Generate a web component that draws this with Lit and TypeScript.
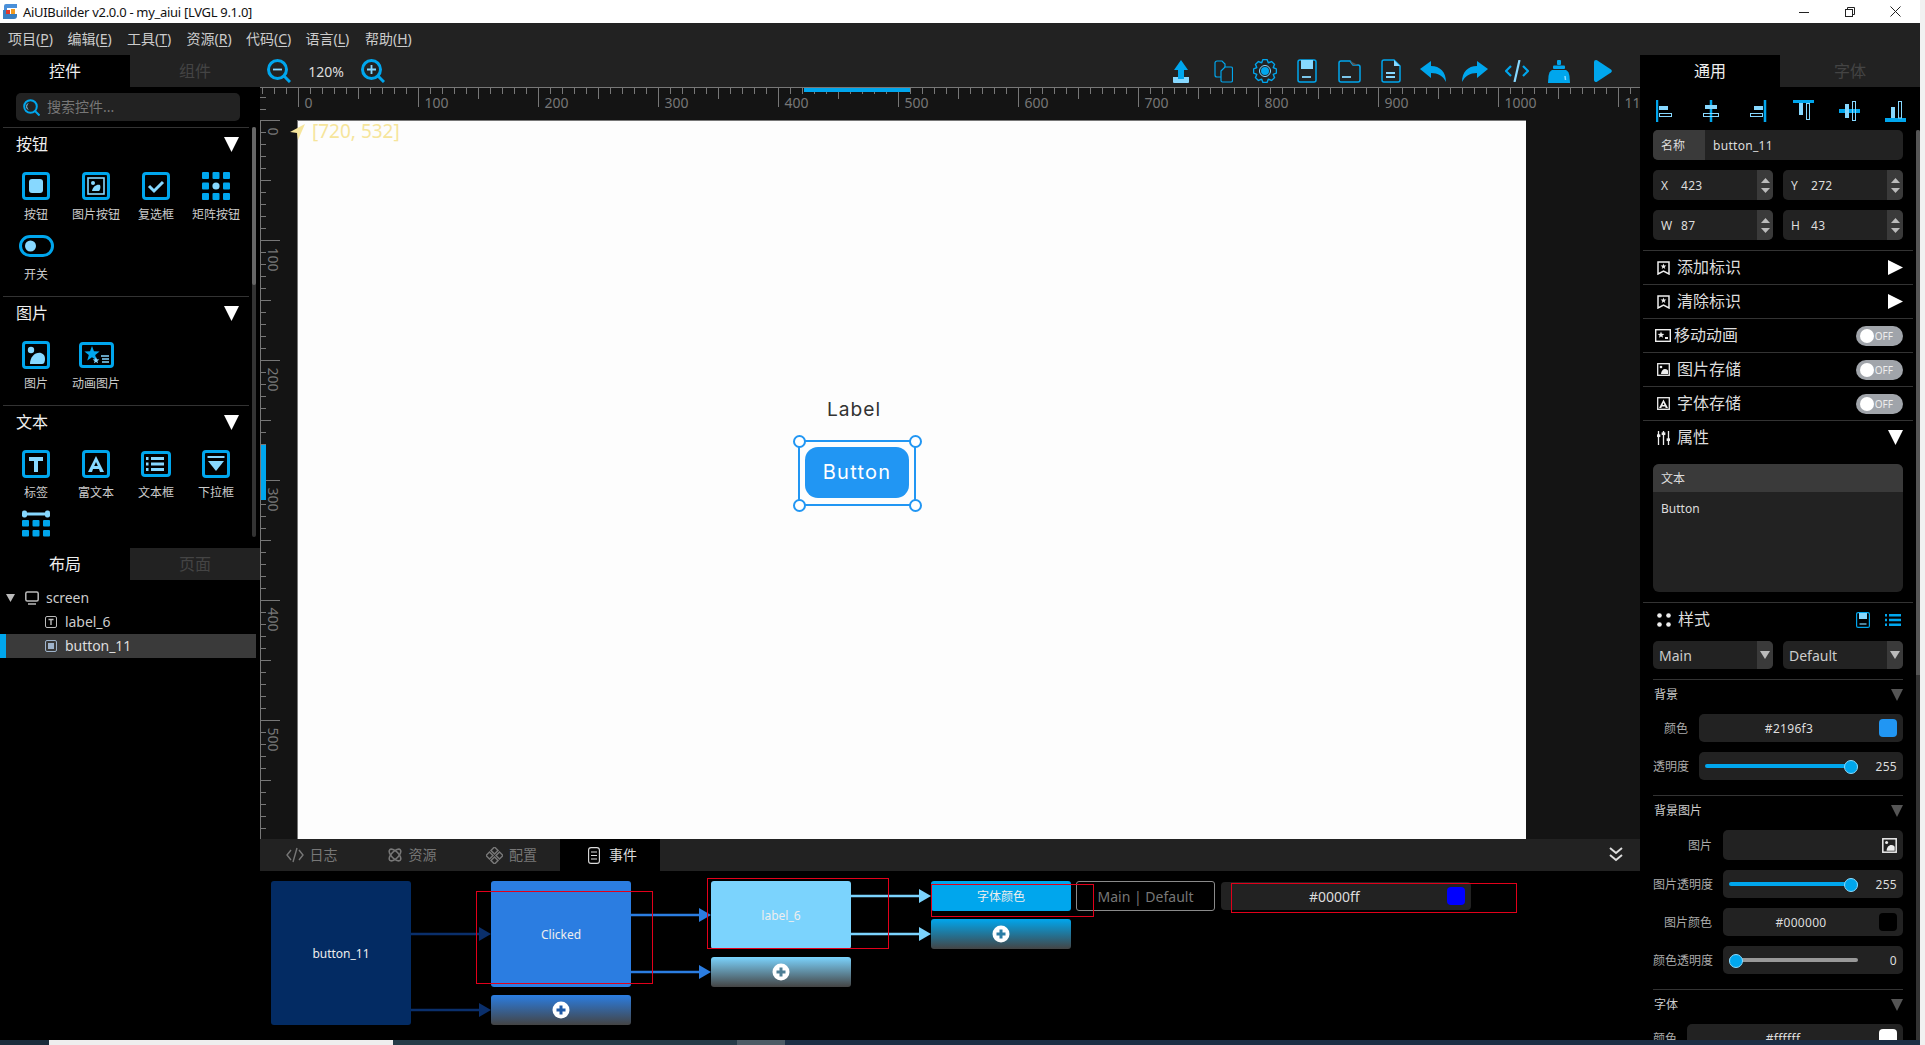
import { LitElement, html, css, svg } from "lit";
import { customElement } from "lit/decorators.js";

const B = "#00a6ed";
const L = "#87d8ff";

const box = (s = 28, c = B) => svg`<rect x="1.5" y="1.5" width="${s - 3}" height="${s - 3}" rx="2.5" fill="none" stroke="${c}" stroke-width="3"/>`;
const i28 = (c: unknown, w = 28, h = 28) => html`<svg width="${w}" height="${h}" viewBox="0 0 ${w} ${h}">${c}</svg>`;

const star = (cx: number, cy: number, r: number, fill: string) => {
  const pts: string[] = [];
  for (let k = 0; k < 10; k++) {
    const a = -Math.PI / 2 + (k * Math.PI) / 5;
    const rr = k % 2 ? r * 0.42 : r;
    pts.push(`${(cx + rr * Math.cos(a)).toFixed(2)},${(cy + rr * Math.sin(a)).toFixed(2)}`);
  }
  return svg`<polygon points="${pts.join(" ")}" fill="${fill}"/>`;
};

const gearPath = () => {
  const pts: string[] = [];
  const n = 8;
  for (let k = 0; k < n; k++) {
    const a = (k * 2 * Math.PI) / n - Math.PI / 2;
    const d = Math.PI / n;
    for (const [o, r] of [[-0.95, 9], [-0.45, 11.6], [0.45, 11.6], [0.95, 9]] as [number, number][]) {
      const t = a + o * d;
      pts.push(`${(12 + r * Math.cos(t)).toFixed(2)},${(12 + r * Math.sin(t)).toFixed(2)}`);
    }
  }
  return pts.join(" ");
};

const widgetIcons: Record<string, unknown> = {
  button: i28(svg`${box()}<rect x="7" y="7" width="14" height="14" rx="3" fill="${L}"/>`),
  imgbtn: i28(svg`${box()}<rect x="6" y="6" width="16" height="16" fill="none" stroke="${L}" stroke-width="1.6"/><circle cx="11" cy="11" r="2" fill="${L}"/><path d="M10 19c1-5 5-7 8-6 1 2 0 5-1 6z" fill="${L}"/>`),
  check: i28(svg`${box()}<path d="M7 14l5 5 9-9" fill="none" stroke="${L}" stroke-width="3"/>`),
  matrix: i28(
    [0, 1, 2].map((r) =>
      [0, 1, 2].map((c) =>
        r === 1 && c === 1
          ? svg`<circle cx="14" cy="14" r="3.6" fill="${L}"/>`
          : svg`<rect x="${c * 10.5}" y="${r * 10.5}" width="7" height="7" rx="1" fill="${B}"/>`
      )
    )
  ),
  toggle: i28(svg`<rect x="1.5" y="1.5" width="32" height="19" rx="9.5" fill="none" stroke="${B}" stroke-width="3"/><circle cx="11.5" cy="11" r="5.5" fill="${L}"/>`, 35, 22),
  image: i28(svg`${box()}<circle cx="9" cy="9" r="3.2" fill="${L}"/><path d="M8 23c0-7 5-12 11-11 3 1 4 3 4 6 0 3-1 5-3 5z" fill="${L}"/>`),
  anim: i28(svg`<rect x="1.5" y="1.5" width="32" height="23" rx="2.5" fill="none" stroke="${B}" stroke-width="3"/>${star(13, 12, 8, B)}${star(17, 18.5, 3.5, L)}<path d="M22 14h8M23 17h7M23 20h7" stroke="${L}" stroke-width="1.6"/>`, 35, 26),
  label: i28(svg`${box()}<path d="M7 7h14v4h-5v11h-4V11H7z" fill="${L}"/>`),
  rich: i28(svg`${box()}<path d="M14 6l8 16h-4l-1-3h-6l-1 3H6zM14 12l-1.8 4h3.6z" fill="${L}" fill-rule="evenodd"/>`),
  list: i28(svg`<rect x="1.5" y="1.5" width="27" height="23" rx="2.5" fill="none" stroke="${B}" stroke-width="3"/><path d="M10 7.5h13M10 13h13M10 18.5h13" stroke="${L}" stroke-width="3"/><path d="M5 7.5h2.500M5 13h2.500M5 18.500h2.500" stroke="${L}" stroke-width="3"/>`, 30, 26),
  drop: i28(svg`${box()}<path d="M5.500 7h17" stroke="${L}" stroke-width="2"/><path d="M6 11h16l-8 10z" fill="${L}"/>`),
  cal: i28(
    svg`<path d="M3 4h22" stroke="${L}" stroke-width="3"/><rect x="0" y="0.500" width="5" height="7" rx="2" fill="${L}"/><rect x="23" y="0.500" width="5" height="7" rx="2" fill="${L}"/>
    ${[0, 1, 2].map((c) => [0, 1].map((r) => svg`<rect x="${c * 10.5}" y="${10 + r * 10}" width="7" height="6.500" rx="1" fill="${B}"/>`))}`
  ),
};

const zoomIcon = (plus: boolean) => html`<svg width="24" height="24" viewBox="0 0 24 24">
  <circle cx="10.5" cy="10.500" r="9" fill="none" stroke="${B}" stroke-width="3"/>
  <path d="M17 17l6 6" stroke="${B}" stroke-width="3"/>
  <path d="M6 10.500h9${plus ? "M10.500 6v9" : ""}" stroke="${L}" stroke-width="1.800"/></svg>`;

const tools = [
  html`<svg width="16" height="23" viewBox="0 0 16 23"><path d="M8 0l7 10h-4v7H5v-7H1z" fill="${B}"/><path d="M0 17h16v5a1 1 0 0 1-1 1H1a1 1 0 0 1-1-1z" fill="${L}"/><path d="M5 17h6v2H5z" fill="${B}"/></svg>`,
  html`<svg width="19" height="23" viewBox="0 0 19 23" fill="none" stroke="${B}" stroke-width="1.200"><path d="M1 3a2 2 0 0 1 2-2h5l3 3v3M1 3v12a2 2 0 0 0 2 2h4"/><path d="M7 11l4-4h6a1.500 1.500 0 0 1 1.500 1.500v12a1.500 1.500 0 0 1-1.500 1.500H8.500A1.500 1.500 0 0 1 7 20.500z"/></svg>`,
  html`<svg width="24" height="24" viewBox="0 0 24 24"><polygon points="${gearPath()}" fill="none" stroke="${B}" stroke-width="1.400"/><circle cx="12" cy="12" r="5.500" fill="none" stroke="${L}" stroke-width="1"/><circle cx="12" cy="12" r="4" fill="${B}"/></svg>`,
  html`<svg width="20" height="24" viewBox="0 0 20 24"><rect x="1" y="1" width="18" height="22" rx="2" fill="none" stroke="${B}" stroke-width="1.500"/><rect x="4" y="1" width="12" height="9" fill="${L}"/><path d="M5 18h9" stroke="${L}" stroke-width="1.800"/></svg>`,
  html`<svg width="23" height="23" viewBox="0 0 23 23"><path d="M1 3a2 2 0 0 1 2-2h9l3 4h5a2 2 0 0 1 2 2v13a2 2 0 0 1-2 2H3a2 2 0 0 1-2-2z" fill="none" stroke="${B}" stroke-width="1.500"/><path d="M12 1l3 4h5z" fill="#555"/><path d="M4 17h9" stroke="${L}" stroke-width="1.800"/></svg>`,
  html`<svg width="20" height="24" viewBox="0 0 20 24"><path d="M3 1h10l6 6v14a2 2 0 0 1-2 2H3a2 2 0 0 1-2-2V3a2 2 0 0 1 2-2z" fill="none" stroke="${B}" stroke-width="1.500"/><path d="M13 1l6 6h-6z" fill="${L}"/><path d="M5 14h9M5 18h9" stroke="${L}" stroke-width="1.800"/></svg>`,
  html`<svg width="26" height="21" viewBox="0 0 26 21"><path d="M0 8L11 0v5c9 0 15 6 15 16-3-6-8-9-15-9v5z" fill="${B}"/></svg>`,
  html`<svg width="26" height="21" viewBox="0 0 26 21"><path d="M26 8L15 0v5C6 5 0 11 0 21c3-6 8-9 15-9v5z" fill="${B}"/></svg>`,
  html`<svg width="24" height="22" viewBox="0 0 24 22" fill="none" stroke-width="2.200"><path d="M6 6l-5 5 5 5M18 6l5 5-5 5" stroke="${B}"/><path d="M14.500 0l-5 22" stroke="${L}"/></svg>`,
  html`<svg width="22" height="23" viewBox="0 0 22 23"><rect x="9" y="0" width="4" height="5" rx="1" fill="${B}"/><rect x="5" y="5.500" width="12" height="3.500" rx="1" fill="${B}"/><path d="M4 10h14c2 1 3 3 3.500 6l.5 7H0l.5-7C1 13 2 11 4 10z" fill="${B}"/><path d="M17 16l.5 4" stroke="${L}" stroke-width="1.500"/></svg>`,
  html`<svg width="18" height="22" viewBox="0 0 18 22"><path d="M2 0a2 2 0 0 0-2 2v18a2 2 0 0 0 3 1.700L17 12.500a2 2 0 0 0 0-3L3 .3z" fill="${B}"/></svg>`,
];

const aligns = [
  svg`<path d="M1 0v22" stroke="${B}" stroke-width="2.500"/><rect x="3" y="6" width="9" height="4" fill="${L}"/><rect x="3.500" y="13.500" width="12" height="3" fill="none" stroke="${L}"/>`,
  svg`<path d="M9 0v22" stroke="${B}" stroke-width="2.500"/><rect x="3" y="5" width="12" height="4" fill="${L}"/><rect x="1.500" y="13.500" width="15" height="3" fill="none" stroke="${L}"/>`,
  svg`<path d="M17 0v22" stroke="${B}" stroke-width="2.500"/><rect x="6" y="6" width="9" height="4" fill="${L}"/><rect x="2.500" y="13.500" width="12" height="3" fill="none" stroke="${L}"/>`,
  svg`<path d="M0 1.500h21" stroke="${B}" stroke-width="3"/><rect x="6" y="3" width="4" height="12" fill="${L}"/><rect x="13.500" y="3.500" width="3" height="16" fill="none" stroke="${L}"/>`,
  svg`<path d="M0 11h21" stroke="${B}" stroke-width="4"/><rect x="6" y="4" width="4" height="14" fill="${L}"/><rect x="13.500" y="1.500" width="3" height="19" fill="none" stroke="${L}"/>`,
  svg`<path d="M0 20h21" stroke="${B}" stroke-width="4"/><rect x="6" y="7" width="4" height="11" fill="${L}"/><rect x="13.500" y="1.500" width="3" height="16.500" fill="none" stroke="${L}"/>`,
];

const W = "#eee";
const mark = html`<svg class="ri" width="13" height="14" viewBox="0 0 13 14"><path d="M1 1h11v12l-5.500-3L1 13z" fill="none" stroke="${W}" stroke-width="1.500"/>${star(6.5, 5.5, 3, W)}</svg>`;
const animMini = html`<svg class="ri wide" width="16" height="13" viewBox="0 0 16 13"><rect x=".7" y=".7" width="14.600" height="11.600" fill="none" stroke="${W}" stroke-width="1.400"/>${star(6, 6, 3.500, W)}<path d="M10 8h3v2h-3z" fill="${W}"/></svg>`;
const imgMini = (c = W, s = 13) => html`<svg class="ri" width="${s}" height="${s}" viewBox="0 0 13 13"><rect x=".7" y=".7" width="11.600" height="11.600" fill="none" stroke="${c}" stroke-width="1.300"/><circle cx="4" cy="4" r="1.300" fill="${c}"/><path d="M4 11c0-3 2-5 4-5s3 1 3 2v3z" fill="${c}"/></svg>`;
const fontMini = html`<svg class="ri" width="13" height="13" viewBox="0 0 13 13"><rect x=".7" y=".7" width="11.600" height="11.600" fill="none" stroke="${W}" stroke-width="1.300"/><path d="M6.500 2.500L11 11H8.700l-.6-1.400H4.900L4.300 11H2zM6.500 5.800L5.600 8h1.800z" fill="${W}" fill-rule="evenodd"/></svg>`;
const sliders = html`<svg class="ri" width="13" height="14" viewBox="0 0 13 14" stroke="${W}" stroke-width="1.300" fill="${W}"><path d="M1.500 0v14M6.500 0v14M11.500 0v14"/><rect x=".3" y="4" width="2.400" height="1.400"/><rect x="5.300" y="2" width="2.400" height="1.400"/><rect x="10.300" y="8" width="2.400" height="1.400"/></svg>`;
const dots = html`<svg class="ri" width="14" height="14" viewBox="0 0 14 14" fill="${W}"><circle cx="2.500" cy="2.500" r="2.300"/><circle cx="11.500" cy="2.500" r="2.300"/><circle cx="2.500" cy="11.500" r="2.300"/><circle cx="11.500" cy="11.500" r="2.300"/></svg>`;

const triDown = (c = "#fff", w = 15, h = 15) => html`<svg class="tri" width="${w}" height="${h}" viewBox="0 0 15 15" preserveAspectRatio="none"><path d="M0 0h15L7.500 15z" fill="${c}"/></svg>`;
const triRight = html`<svg class="tri" width="15" height="15" viewBox="0 0 15 15"><path d="M0 0l15 7.500L0 15z" fill="#fff"/></svg>`;

const tabG = "#777";
const tabIcons = [
  html`<svg width="18" height="16" viewBox="0 0 18 16" fill="none" stroke="${tabG}" stroke-width="1.400"><path d="M5 3L1 8l4 5M13 3l4 5-4 5M11 1L7 15"/></svg>`,
  html`<svg width="16" height="16" viewBox="0 0 16 16" fill="none" stroke="${tabG}" stroke-width="1.600"><ellipse cx="8" cy="8" rx="3.500" ry="7.500" transform="rotate(45 8 8)"/><ellipse cx="8" cy="8" rx="3.500" ry="7.500" transform="rotate(-45 8 8)"/></svg>`,
  html`<svg width="17" height="17" viewBox="0 0 17 17" fill="none" stroke="${tabG}" stroke-width="1.500"><rect x="6" y="1" width="5" height="5" transform="rotate(45 8.500 3.500)"/><rect x="6" y="11" width="5" height="5" transform="rotate(45 8.500 13.500)"/><rect x="1" y="6" width="5" height="5" transform="rotate(45 3.500 8.500)"/><rect x="11" y="6" width="5" height="5" transform="rotate(45 13.500 8.500)"/></svg>`,
  html`<svg width="12" height="17" viewBox="0 0 12 17" fill="none" stroke="#ddd" stroke-width="1.100"><rect x=".6" y=".6" width="10.800" height="15.800" rx="2.500"/><path d="M3 5h6M3 8.500h6M3 12h6"/></svg>`,
];

const nodes = [
  { t: "button_11", x: 11, y: 10, w: 140, h: 144, c: "#032b63" },
  { t: "Clicked", x: 231, y: 10, w: 140, h: 106, c: "#2b7de1" },
  { x: 231, y: 124, w: 140, h: 30, c: "#2b7de1", add: "#1f5aa8" },
  { t: "label_6", x: 451, y: 10, w: 140, h: 68, c: "#7bd3fd" },
  { x: 451, y: 86, w: 140, h: 30, c: "#7bd3fd", add: "#4e7f96" },
  { t: "字体颜色", x: 671, y: 10, w: 140, h: 30, c: "#00a6ed" },
  { x: 671, y: 48, w: 140, h: 30, c: "#00a6ed", add: "#2a7da5" },
];
const links = [
  { x: 151, y: 63, c: "#0a2f6b" },
  { x: 151, y: 139, c: "#0a2f6b" },
  { x: 371, y: 44, c: "#2b7de1" },
  { x: 371, y: 101, c: "#2b7de1" },
  { x: 591, y: 25, c: "#7bd3fd" },
  { x: 591, y: 63, c: "#7bd3fd" },
];
const redBoxes = [
  { x: 216, y: 20, w: 177, h: 93 },
  { x: 447, y: 7, w: 182, h: 71 },
  { x: 671, y: 13, w: 163, h: 33 },
  { x: 971, y: 12, w: 286, h: 30 },
];

const topRuler = () => {
  const out: unknown[] = [];
  for (let i = -3; i <= 111; i++) {
    const x = 38.5 + 12 * i;
    const len = i % 10 === 0 ? 19 : i % 5 === 0 ? 11 : 6;
    out.push(svg`<path d="M${x} 0v${len}" stroke="#777"/>`);
    if (i % 10 === 0 && i >= 0) out.push(svg`<text x="${x + 6}" y="20" class="rt">${i * 10}</text>`);
  }
  return out;
};
const leftRuler = () => {
  const out: unknown[] = [];
  for (let i = 0; i < 60; i++) {
    const y = 0.5 + 12 * i;
    const len = i % 10 === 0 ? 19 : i % 5 === 0 ? 10 : 5;
    out.push(svg`<path d="M0 ${y}h${len}" stroke="#777"/>`);
    if (i % 10 === 0) out.push(svg`<text transform="translate(7 ${y + 7}) rotate(90)" class="rt">${i * 10}</text>`);
  }
  return out;
};

const plus = (c: string) => html`<svg width="18" height="18" viewBox="0 0 18 18"><circle cx="9" cy="9" r="8.500" fill="#fff"/><path d="M4.500 9h9M9 4.500v9" stroke="${c}" stroke-width="3"/></svg>`;

@customElement("app-root")
export class AppRoot extends LitElement {
  static styles = css`
    :host {
      display: block;
      width: 1925px;
      height: 1045px;
      overflow: hidden;
      background: #f1f1f1;
      font-family: "Noto Sans", "Noto Sans CJK SC", sans-serif;
      color: #ddd;
      font-size: 13px;
    }
    * { box-sizing: border-box; }
    svg { display: block; flex: none; }
    .window { width: 1920px; height: 1040px; display: flex; flex-direction: column; background: #000; }
    .titlebar { height: 23px; background: #fff; color: #111; display: flex; align-items: center; padding-left: 3px; gap: 6px; font-size: 13px; letter-spacing: -.3px; flex: none; }
    .ctrls { margin-left: auto; display: flex; align-items: center; }
    .ctrls .c1 { margin-right: 36px; }
    .ctrls .c2 { margin-right: 35px; }
    .ctrls .c3 { margin-right: 19px; }
    .menubar { height: 32px; background: #222; display: flex; align-items: center; color: #ccc; font-size: 14px; flex: none; }
    .menubar span { padding: 0 8px 2px; width: 59.500px; white-space: nowrap; }
    .menubar u { text-underline-offset: 2px; }
    .work { display: grid; grid-template-columns: 260px 1380px 280px; height: 985px; }
    .col { display: flex; flex-direction: column; min-height: 0; min-width: 0; }
    .tabs { display: flex; height: 32px; flex: none; background: #222; }
    .tab { flex: 1; display: flex; align-items: center; justify-content: center; font-size: 16px; color: #444; padding-bottom: 3px; }
    .tab.on { background: #000; color: #eee; }
    .search-wrap { padding: 6px 20px 6px 16px; flex: none; }
    .search { height: 28px; background: #222; border-radius: 5px; display: flex; align-items: center; gap: 7px; padding-left: 7px; color: #777; font-size: 14px; }
    .search span { padding-bottom: 2px; }
    .widgets { height: 421px; flex: none; display: flex; overflow: hidden; }
    .wscroll { width: 252px; padding-left: 3px; flex: none; overflow: hidden; }
    .vbar { width: 4px; height: 410px; border-radius: 2px; background: #333; flex: none; }
    .vbar i { display: block; height: 158px; background: #666; border-radius: 2px; }
    .sect { border-top: 1px solid #333; padding-bottom: 8px; width: 246px; }
    .sect.last { padding-bottom: 0; }
    .shead { height: 32px; margin-bottom: 8px; display: flex; align-items: center; justify-content: space-between; padding: 0 10px 0 13px; font-size: 16px; color: #eee; }
    .shead span { padding-bottom: 3px; }
    .grid { display: grid; grid-template-columns: repeat(4, 60px); grid-auto-rows: 60px; margin-left: 3px; }
    .w { display: flex; flex-direction: column; align-items: center; color: #ccc; font-size: 12px; }
    .w .ib { height: 28px; margin-top: 4px; margin-bottom: 6px; display: flex; align-items: center; justify-content: center; }
    .w .lb { line-height: 18px; white-space: nowrap; }
    .tree { padding-top: 6px; font-size: 14px; color: #ccc; letter-spacing: -.05px; }
    .tr { height: 24px; display: flex; align-items: center; }
    .tr span { padding-bottom: 1px; }
    .tr.root { padding-left: 6px; gap: 10px; }
    .tr.root span { margin-left: -3px; }
    .tr.l2 { padding-left: 45px; gap: 8px; }
    .tr.sel { width: 256px; background: #3a3a3a; border-left: 6px solid #00a6ed; padding-left: 39px; color: #ddd; }

    .toolbar { height: 32px; background: #222; display: flex; align-items: center; flex: none; padding-left: 7px; }
    .pct { width: 70px; text-align: center; font-size: 14px; color: #ddd; }
    .zoomz { display: flex; align-items: center; }
    .tools { margin-left: auto; margin-right: 14px; height: 32px; display: grid; align-items: center; justify-items: center; grid-template-columns: repeat(10, 42px) 46px; }
    .stage { height: 752px; background: #141414; display: grid; grid-template-columns: 37px 1fr; grid-template-rows: 33px 719px; flex: none; position: relative; overflow: hidden; }
    .rtop { grid-column: 1 / 3; border-top: 1px solid #777; overflow: hidden; position: relative; }
    .rleft { position: relative; border-left: 1px solid #777; }
    .rt { font: 14px "Noto Sans", sans-serif; fill: #777; }
    .hl-top { position: absolute; left: 544px; top: 0; width: 106px; height: 4px; background: #00a6ed; }
    .hl-left { position: absolute; left: 0; top: 325px; width: 5px; height: 55px; background: #00a6ed; }
    .canvas { width: 1229px; height: 719px; background: #fdfdfd; position: relative; border-top: 1px solid #777; border-left: 1px solid #777; }
    .hint { position: absolute; left: 14px; top: -1px; font-size: 19px; line-height: 22px; color: #f6e59b; }
    .arrow { position: absolute; left: 30px; top: 37px; }
    .lv-label { position: absolute; left: 529px; top: 276px; font: 400 19.200px Inter, sans-serif; letter-spacing: 1px; color: #333; line-height: 24px; }
    .lv-btn { position: absolute; left: 507px; top: 326px; width: 104px; height: 51px; padding-bottom: 2px; border-radius: 13px; background: #2196f3; color: #fff; display: flex; align-items: center; justify-content: center; font: 400 20px Inter, sans-serif; letter-spacing: 1.200px; }
    .frame { position: absolute; left: 500px; top: 319px; width: 118px; height: 66px; border: 2px solid #2196f3; }
    .h { position: absolute; width: 13px; height: 13px; background: #fff; border: 2.500px solid #2196f3; border-radius: 50%; }
    .h.a { left: -7.500px; top: -7.500px; } .h.b { right: -7.500px; top: -7.500px; }
    .h.c { left: -7.500px; bottom: -7.500px; } .h.d { right: -7.500px; bottom: -7.500px; }

    .btabs { height: 32px; background: #222; display: flex; flex: none; align-items: center; position: relative; }
    .btab { width: 100px; height: 32px; display: flex; align-items: center; justify-content: center; gap: 6px; color: #777; font-size: 14px; padding-left: 3px; }
    .btab span { padding-bottom: 2px; }
    .btab.on { background: #000; color: #ddd; gap: 9px; padding-left: 5px; }
    .chev { position: absolute; left: 1349px; top: 8px; }
    .diagram { height: 169px; position: relative; background: #000; flex: none; overflow: hidden; }
    .node { position: absolute; border-radius: 3px; display: flex; align-items: center; justify-content: center; color: #eee; font-size: 12px; }
    .link { position: absolute; width: 80px; height: 14px; }
    .red { position: absolute; border: 1px solid #e2001a; }
    .mdbox { position: absolute; left: 816px; top: 10px; width: 139px; height: 30px; border: 1px solid #8a8a8a; border-radius: 3px; display: flex; align-items: center; justify-content: center; color: #777; font-size: 14px; }
    .colbox { position: absolute; left: 961px; top: 11px; width: 250px; height: 28px; border-radius: 4px; background: #222; display: flex; align-items: center; color: #ddd; font-size: 14px; }
    .colbox b { font-weight: 400; margin-left: 88px; width: 138px; }
    .colbox i { width: 18px; height: 18px; border-radius: 4px; background: #0000ff; }

    .rpanel { display: flex; flex: 1; min-height: 0; }
    .rmain { width: 276px; flex: none; overflow: hidden; padding-left: 13px; }
    .rbar { width: 4px; margin-top: 43px; background: #333; flex: none; border-radius: 2px 2px 0 0; }
    .rbar i { display: block; height: 545px; background: #555; border-radius: 2px 2px 0 0; }
    .aligns { height: 43px; padding: 13px 0 0 3px; width: 253px; display: flex; justify-content: space-between; }
    .fld { background: #222; border-radius: 5px; height: 30px; width: 250px; display: flex; align-items: center; overflow: hidden; color: #ddd; font-size: 12px; }
    .fld .k { width: 52px; height: 100%; background: #3a3a3a; display: flex; align-items: center; padding-left: 8px; }
    .fld .v { padding-left: 8px; letter-spacing: .3px; }
    .two { display: flex; gap: 10px; margin-top: 10px; width: 250px; }
    .spin { flex: 1; height: 30px; background: #222; border-radius: 5px; display: flex; align-items: center; overflow: hidden; color: #ddd; font-size: 12px; letter-spacing: .3px; }
    .spin .k { width: 28px; padding-left: 8px; }
    .spin .v { flex: 1; }
    .spin .btn { width: 16px; height: 100%; background: #3a3a3a; display: flex; flex-direction: column; align-items: center; justify-content: space-around; padding: 5px 0; }
    .row { margin-left: -10px; width: 270px; height: 34px; border-top: 1px solid #333; display: flex; align-items: center; padding: 0 10px 0 14px; color: #ddd; font-size: 16px; }
    .row .ri { margin-right: 7px; }
    .row .ri.wide { margin-left: -2px; margin-right: 3px; }
    .row > span:not(.end) { padding-bottom: 3px; }
    .row.first { margin-top: 10px; }
    .row .end { margin-left: auto; }
    .sw { width: 47px; height: 20px; border-radius: 10px; background: #a0a4aa; position: relative; display: flex; align-items: center; justify-content: flex-end; padding-right: 10px; color: #eee; font-size: 10px; }
    .sw::before { content: ""; position: absolute; left: 4px; top: 3px; width: 14px; height: 14px; border-radius: 50%; background: #fff; }
    .textarea { width: 250px; height: 128px; margin-top: 10px; background: #222; border-radius: 6px; overflow: hidden; font-size: 12px; }
    .textarea .th { height: 28px; background: #3a3a3a; display: flex; align-items: center; padding-left: 8px; color: #ddd; }
    .textarea .tb { padding: 8px; line-height: 18px; color: #ddd; }
    .row.sty { margin-top: 10px; padding-right: 12px; }
    .row.sty .sv { margin-left: auto; margin-right: 15px; }
    .drops { display: flex; gap: 10px; margin-top: 5px; width: 250px; }
    .dd { flex: 1; height: 28px; background: #222; border-radius: 5px; display: flex; align-items: center; overflow: hidden; font-size: 14px; color: #ccc; padding-left: 6px; justify-content: space-between; }
    .dd .a { width: 16px; height: 100%; background: #3a3a3a; display: flex; align-items: center; justify-content: center; }
    .gh { width: 250px; border-top: 1px solid #333; display: flex; align-items: center; justify-content: space-between; height: 30px; padding-left: 1px; color: #ccc; font-size: 12px; margin-top: 10px; }
    .gh span { padding-bottom: 2px; }
    .gh.big { margin-top: 15px; }
    .frow { width: 250px; display: flex; align-items: center; margin-top: 10px; }
    .frow.tight { margin-top: 5px; }
    .flabel { flex: 1; min-width: 0; text-align: right; padding-right: 11px; padding-bottom: 1px; color: #aaa; font-size: 12px; white-space: nowrap; }
    .fbox { height: 28px; background: #222; border-radius: 5px; display: flex; align-items: center; color: #ddd; font-size: 12px; padding: 0 6px; flex: none; }
    .fbox.h30 { height: 30px; }
    .w204 { width: 204px; } .w180 { width: 180px; } .w216 { width: 216px; }
    .fbox .val { flex: 1; text-align: center; letter-spacing: .3px; padding-right: 6px; }
    .fbox .sq { width: 18px; height: 18px; border-radius: 4px; flex: none; }
    .fbox .num { width: 34px; text-align: right; font-size: 12px; letter-spacing: .3px; }
    .slider { flex: 1; height: 4px; border-radius: 2px; position: relative; margin-right: 5px; }
    .slider::after { content: ""; position: absolute; top: -4px; width: 12px; height: 12px; border-radius: 50%; background: #00a6ed; border: 1.500px solid #8bdcff; }
    .slider.full { background: #00a6ed; }
    .slider.full::after { right: 0; }
    .slider.zero { background: #999; }
    .slider.zero::after { left: 0; }
    .strip { height: 5px; width: 1920px; display: flex; flex: none; }
    .strip i { display: block; height: 5px; }
    .st0 { width: 49px; background: #1b2c3c; } .st1 { width: 344px; background: #eee; } .st2 { width: 344px; background: #263c48; }
    .st3 { width: 48px; background: #4d5c66; } .st4 { flex: 1; background: #1c2e44; }
  `;

  private widget(icon: string, label?: string) {
    return html`<div class="w"><div class="ib">${widgetIcons[icon]}</div>${label ? html`<div class="lb">${label}</div>` : ""}</div>`;
  }
  private spin(k: string, v: string) {
    const up = html`<svg width="9" height="5" viewBox="0 0 9 5"><path d="M0 5h9L4.500 0z" fill="#bbb"/></svg>`;
    const dn = html`<svg width="9" height="5" viewBox="0 0 9 5"><path d="M0 0h9L4.500 5z" fill="#bbb"/></svg>`;
    return html`<div class="spin"><span class="k">${k}</span><span class="v">${v}</span><div class="btn">${up}${dn}</div></div>`;
  }
  private mnem(a: string, k: string) {
    return html`<span>${a}(<u>${k}</u>)</span>`;
  }

  render() {
    return html`<div class="window">
      <div class="titlebar">
        <svg width="14" height="15" viewBox="0 0 14 15"><path d="M3 0h11v4H4v2H1V2a2 2 0 0 1 2-2z" fill="#4a90d9"/><path d="M0 6h5v4h9v2a3 3 0 0 1-3 3H0z" fill="#3a7fc0"/><rect x="3" y="6" width="4" height="4" fill="#e0392b"/><rect x="8" y="5" width="4" height="5" fill="#f39a1e"/></svg>
        <span>AiUIBuilder v2.0.0 - my_aiui [LVGL 9.1.0]</span>
        <div class="ctrls">
          <svg class="c1" width="10" height="10" viewBox="0 0 10 10"><path d="M0 5.500h10" stroke="#222"/></svg>
          <svg class="c2" width="10" height="10" viewBox="0 0 10 10" fill="none" stroke="#222"><rect x=".5" y="2.500" width="7" height="7"/><path d="M2.500 2.500v-2h7v7h-2"/></svg>
          <svg class="c3" width="11" height="11" viewBox="0 0 11 11"><path d="M.5.500l10 10M10.500.500l-10 10" stroke="#222"/></svg>
        </div>
      </div>
      <div class="menubar">
        ${this.mnem("项目", "P")}${this.mnem("编辑", "E")}${this.mnem("工具", "T")}${this.mnem("资源", "R")}${this.mnem("代码", "C")}${this.mnem("语言", "L")}${this.mnem("帮助", "H")}
      </div>
      <div class="work">
        <div class="col">
          <div class="tabs"><div class="tab on">控件</div><div class="tab">组件</div></div>
          <div class="search-wrap">
            <div class="search">
              <svg width="17" height="17" viewBox="0 0 17 17"><circle cx="7.500" cy="7.500" r="6.300" fill="none" stroke="${B}" stroke-width="2"/><path d="M12 12l4.500 4.500" stroke="${B}" stroke-width="2"/><path d="M5 4.500a4 4 0 0 0 0 6" fill="none" stroke="${L}"/></svg>
              <span>搜索控件...</span>
            </div>
          </div>
          <div class="widgets">
            <div class="wscroll">
              <div class="sect">
                <div class="shead"><span>按钮</span>${triDown()}</div>
                <div class="grid">
                  ${this.widget("button", "按钮")}${this.widget("imgbtn", "图片按钮")}${this.widget("check", "复选框")}${this.widget("matrix", "矩阵按钮")}${this.widget("toggle", "开关")}
                </div>
              </div>
              <div class="sect">
                <div class="shead"><span>图片</span>${triDown()}</div>
                <div class="grid">${this.widget("image", "图片")}${this.widget("anim", "动画图片")}</div>
              </div>
              <div class="sect last">
                <div class="shead"><span>文本</span>${triDown()}</div>
                <div class="grid">
                  ${this.widget("label", "标签")}${this.widget("rich", "富文本")}${this.widget("list", "文本框")}${this.widget("drop", "下拉框")}${this.widget("cal")}
                </div>
              </div>
            </div>
            <div class="vbar"><i></i></div>
          </div>
          <div class="tabs"><div class="tab on">布局</div><div class="tab">页面</div></div>
          <div class="tree">
            <div class="tr root">
              <svg width="9" height="8" viewBox="0 0 9 8"><path d="M0 0h9L4.500 8z" fill="#bbb"/></svg>
              <svg width="14" height="14" viewBox="0 0 14 14" fill="none" stroke="#bbb" stroke-width="1.500"><rect x=".8" y="1" width="12.400" height="9" rx="1.500"/><path d="M3 13h8"/></svg>
              <span>screen</span>
            </div>
            <div class="tr l2">
              <svg width="12" height="12" viewBox="0 0 12 12" fill="none" stroke="#bbb"><rect x=".5" y=".5" width="11" height="11" rx="1.500"/><path d="M3.500 3.500h5M6 3.500v5.500" stroke-width="1.400"/></svg>
              <span>label_6</span>
            </div>
            <div class="tr l2 sel">
              <svg width="12" height="12" viewBox="0 0 12 12"><rect x=".5" y=".5" width="11" height="11" rx="1.500" fill="none" stroke="#9fb4cc"/><rect x="3" y="3" width="6" height="6" fill="#9fb4cc"/></svg>
              <span>button_11</span>
            </div>
          </div>
        </div>

        <div class="col">
          <div class="toolbar">
            <div class="zoomz">${zoomIcon(false)}<div class="pct">120%</div>${zoomIcon(true)}</div>
            <div class="tools">${tools.map((t) => html`${t}`)}</div>
          </div>
          <div class="stage">
            <div class="rtop">
              <svg width="1380" height="33" viewBox="0 0 1380 33">
                ${topRuler()}
                <path d="M0 9.500h6M0 21.500h6" stroke="#777"/>
              </svg>
              <div class="hl-top"></div>
            </div>
            <div class="rleft">
              <svg width="36" height="719" viewBox="0 0 36 719">${leftRuler()}</svg>
              <div class="hl-left"></div>
            </div>
            <div class="canvas">
              <div class="hint">[720, 532]</div>
              <div class="lv-label">Label</div>
              <div class="lv-btn">Button</div>
              <div class="frame"><i class="h a"></i><i class="h b"></i><i class="h c"></i><i class="h d"></i></div>
            </div>
            <svg class="arrow" width="16" height="17" viewBox="0 0 16 17"><path d="M0 8L15 0 8 16l-1-7z" fill="#f6e59b"/></svg>
          </div>
          <div class="btabs">
            <div class="btab">${tabIcons[0]}<span>日志</span></div>
            <div class="btab">${tabIcons[1]}<span>资源</span></div>
            <div class="btab">${tabIcons[2]}<span>配置</span></div>
            <div class="btab on">${tabIcons[3]}<span>事件</span></div>
            <svg class="chev" width="14" height="15" viewBox="0 0 14 15" fill="none" stroke="#ddd" stroke-width="2"><path d="M1 1l6 5 6-5M1 8l6 5 6-5"/></svg>
          </div>
          <div class="diagram">
            ${links.map(
              (l) => html`<svg class="link" style="left:${l.x}px;top:${l.y - 7}px" width="80" height="14" viewBox="0 0 80 14"><path d="M0 7h70" stroke="${l.c}" stroke-width="2.500"/><path d="M68 0l12 7-12 7z" fill="${l.c}"/></svg>`
            )}
            ${nodes.map((n) =>
              n.add
                ? html`<div class="node" style="left:${n.x}px;top:${n.y}px;width:${n.w}px;height:${n.h}px;background:linear-gradient(${n.c},#444)">${plus(n.add)}</div>`
                : html`<div class="node" style="left:${n.x}px;top:${n.y}px;width:${n.w}px;height:${n.h}px;background:${n.c}">${n.t}</div>`
            )}
            <div class="mdbox">Main | Default</div>
            <div class="colbox"><b>#0000ff</b><i></i></div>
            ${redBoxes.map((r) => html`<div class="red" style="left:${r.x}px;top:${r.y}px;width:${r.w}px;height:${r.h}px"></div>`)}
          </div>
        </div>

        <div class="col">
          <div class="tabs"><div class="tab on">通用</div><div class="tab">字体</div></div>
          <div class="rpanel">
            <div class="rmain">
              <div class="aligns">${aligns.map((a) => html`<svg width="21" height="22" viewBox="0 0 21 22">${a}</svg>`)}</div>
              <div class="fld"><div class="k">名称</div><div class="v">button_11</div></div>
              <div class="two">${this.spin("X", "423")}${this.spin("Y", "272")}</div>
              <div class="two">${this.spin("W", "87")}${this.spin("H", "43")}</div>
              <div class="row first">${mark}<span>添加标识</span><span class="end">${triRight}</span></div>
              <div class="row">${mark}<span>清除标识</span><span class="end">${triRight}</span></div>
              <div class="row">${animMini}<span>移动动画</span><span class="end sw">OFF</span></div>
              <div class="row">${imgMini()}<span>图片存储</span><span class="end sw">OFF</span></div>
              <div class="row">${fontMini}<span>字体存储</span><span class="end sw">OFF</span></div>
              <div class="row">${sliders}<span>属性</span><span class="end">${triDown()}</span></div>
              <div class="textarea"><div class="th">文本</div><div class="tb">Button</div></div>
              <div class="row sty">${dots}<span>样式</span>
                <svg class="sv" width="14" height="16" viewBox="0 0 14 16"><rect x=".6" y=".6" width="12.800" height="14.800" rx="1.500" fill="none" stroke="${B}" stroke-width="1.200"/><rect x="3" y="1" width="8" height="6" fill="${L}"/><path d="M3.500 12h7" stroke="${L}" stroke-width="1.200"/></svg>
                <svg width="16" height="12" viewBox="0 0 16 12" stroke="${B}" stroke-width="2.400"><path d="M4 1.200h12M4 6h12M4 10.800h12M0 1.200h2M0 6h2M0 10.800h2"/></svg>
              </div>
              <div class="drops">
                <div class="dd"><span>Main</span><div class="a">${triDown("#bbb", 10, 8)}</div></div>
                <div class="dd"><span>Default</span><div class="a">${triDown("#bbb", 10, 8)}</div></div>
              </div>
              <div class="gh"><span>背景</span>${triDown("#555", 12, 12)}</div>
              <div class="frow tight"><div class="flabel">颜色</div><div class="fbox w204"><span class="val">#2196f3</span><span class="sq" style="background:#2196f3"></span></div></div>
              <div class="frow"><div class="flabel">透明度</div><div class="fbox w204"><div class="slider full"></div><span class="num">255</span></div></div>
              <div class="gh big"><span>背景图片</span>${triDown("#555", 12, 12)}</div>
              <div class="frow tight"><div class="flabel">图片</div><div class="fbox w180 h30"><span class="val"></span>${imgMini("#eee", 15)}</div></div>
              <div class="frow"><div class="flabel">图片透明度</div><div class="fbox w180"><div class="slider full"></div><span class="num">255</span></div></div>
              <div class="frow"><div class="flabel">图片颜色</div><div class="fbox w180"><span class="val">#000000</span><span class="sq" style="background:#000"></span></div></div>
              <div class="frow"><div class="flabel">颜色透明度</div><div class="fbox w180"><div class="slider zero"></div><span class="num">0</span></div></div>
              <div class="gh big"><span>字体</span>${triDown("#555", 12, 12)}</div>
              <div class="frow tight"><div class="flabel">颜色</div><div class="fbox w216"><span class="val">#ffffff</span><span class="sq" style="background:#fff"></span></div></div>
            </div>
            <div class="rbar"><i></i></div>
          </div>
        </div>
      </div>
      <div class="strip"><i class="st0"></i><i class="st1"></i><i class="st2"></i><i class="st3"></i><i class="st4"></i></div>
    </div>`;
  }
}
